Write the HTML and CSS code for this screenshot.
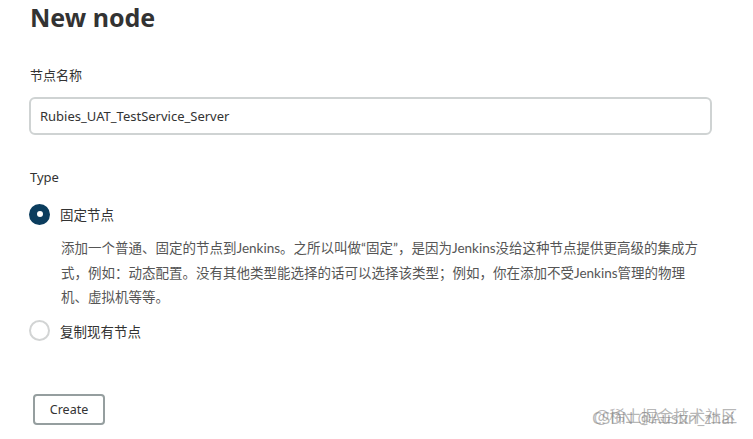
FILE: index.html
```html
<!DOCTYPE html>
<html lang="zh">
<head>
<meta charset="utf-8">
<title>New node</title>
<link rel="stylesheet" href="styles.css">
</head>
<body>
<main class="page">
  <h1 class="title">New node</h1>
  <div class="field">
    <label class="label" for="name">节点名称</label>
    <input class="input" id="name" type="text" value="Rubies_UAT_TestService_Server">
  </div>
  <div class="field type">
    <div class="label">Type</div>
    <div class="option">
      <span class="radio checked"></span>
      <span class="opt-label">固定节点</span>
    </div>
    <p class="desc">添加一个普通、固定的节点到Jenkins。之所以叫做“固定”，是因为Jenkins没给这种节点提供更高级的集成方式，例如：动态配置。没有其他类型能选择的话可以选择该类型；例如，你在添加不受Jenkins管理的物理机、虚拟机等等。</p>
    <div class="option">
      <span class="radio"></span>
      <span class="opt-label">复制现有节点</span>
    </div>
  </div>
  <div class="actions">
    <button class="btn" type="button">Create</button>
  </div>
</main>
<div class="watermark">
  <span class="wm wm1">@稀土掘金技术社区</span>
  <span class="wm wm2">CSDN @Austin_zhai</span>
</div>
</body>
</html>
```
FILE: styles.css
```css
html, body {
  margin: 0;
  padding: 0;
  background: #ffffff;
}
body {
  font-family: "Noto Sans", "Noto Sans CJK SC", sans-serif;
  color: #333;
  width: 753px;
  height: 439px;
  overflow: hidden;
  position: relative;
}
.page {
  padding: 0 42px 0 29px;
}
.title {
  margin: 0 0 0 1px;
  font-size: 25px;
  line-height: 34px;
  font-weight: 700;
  color: #333;
}
.field {
  display: flex;
  flex-direction: column;
}
.label {
  font-family: "Noto Sans", "Noto Sans CJK SC", sans-serif;
  font-size: 13px;
  line-height: 20px;
  color: #333;
  margin-top: 31px;
  margin-left: 1px;
}
.input {
  margin-top: 12px;
  height: 38px;
  box-sizing: border-box;
  border: 2px solid #cfd3d3;
  border-radius: 6px;
  padding: 0 9px;
  font-family: "Noto Sans", sans-serif;
  font-size: 13px;
  color: #333;
  outline: none;
  width: 683px;
}
.type .label {
  margin-top: 32px;
}
.option {
  display: flex;
  align-items: center;
  gap: 10px;
  margin-top: 16px;
  height: 22px;
}
.radio {
  width: 21px;
  height: 21px;
  box-sizing: border-box;
  border-radius: 50%;
  border: 2px solid #d2d4d4;
  background: #fff;
  flex: none;
  position: relative;
}
.radio.checked {
  background: #0b3d5e;
  border-color: #0b3d5e;
}
.radio.checked::after {
  content: "";
  position: absolute;
  left: 50%;
  top: 50%;
  width: 6px;
  height: 6px;
  margin: -3px 0 0 -3px;
  border-radius: 50%;
  background: #fff;
}
.opt-label {
  font-family: "Noto Sans CJK SC", sans-serif;
  font-size: 13.5px;
  color: #333;
}
.desc {
  margin: 11px 0 0 32px;
  font-family: "Lato", "Noto Sans CJK SC", sans-serif;
  font-size: 13.5px;
  line-height: 24.5px;
  color: #555;
  width: 645px;
}
.type .option:last-child {
  margin-top: 10px;
}
.actions {
  margin-top: 52px;
  padding-left: 4px;
}
.btn {
  width: 72px;
  height: 31px;
  box-sizing: border-box;
  border: 2px solid #959e9f;
  border-radius: 4px;
  background: #fff;
  font-family: "Noto Sans", sans-serif;
  font-size: 12.5px;
  color: #333;
  padding: 0;
}
.watermark {
  position: absolute;
  left: 592px;
  top: 406px;
  width: 160px;
  height: 24px;
  pointer-events: none;
}
.wm {
  position: absolute;
  left: 0;
  top: 0;
  line-height: 20px;
  white-space: nowrap;
  color: rgba(120, 120, 120, 0.55);
}
.wm1 {
  left: 2px;
  top: -1px;
  font-family: "Noto Sans CJK SC", sans-serif;
  font-size: 16px;
}
.wm2 {
  top: 2px;
  font-family: "Noto Sans", sans-serif;
  font-size: 15.5px;
}
```
